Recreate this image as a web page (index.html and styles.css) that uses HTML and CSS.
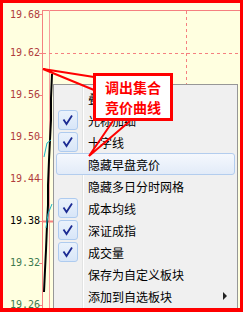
FILE: index.html
```html
<!DOCTYPE html>
<html lang="zh">
<head>
  <meta charset="UTF-8" />
  <title>分时图右键菜单</title>
  <link rel="stylesheet" href="styles.css">
</head>
<body>
  <div class="frame">
    <svg class="chart" width="237" height="305" viewBox="3 3 237 305">
      <path d="M42 10.5H240M42.5 10V308" stroke="#f58080" fill="none"/>
      <path d="M49.5 10V308" stroke="#f7a0a0" fill="none"/>
      <path d="M39 14.5H42M39 53.5H42M39 95.5H42M39 137.5H42M39 179.5H42M39 221.5H42M39 263.5H42M39 305.5H42" stroke="#f58080"/>
      <path d="M43 53.5H240M186.5 11V308" stroke="#f58080" stroke-dasharray="3 3" fill="none"/>
      <path d="M43 221.5H53" stroke="#f58080" stroke-width="2"/>
      <polyline points="52,74 51,98 51,120 50,140 49,160 48,185 48,205 47,225 46,250 45,270 44,292" stroke="#000" stroke-width="2" fill="none"/>
      <polyline points="44,157 47,143 51,140" stroke="#1fb3c4" fill="none"/>
      <polyline points="46,228 48,214 52,204" stroke="#1fb3c4" fill="none"/>
    </svg>

    <div class="axis">
      <span class="first">19.68</span>
      <span>19.62</span>
      <span>19.56</span>
      <span>19.50</span>
      <span>19.44</span>
      <span class="cur">19.38</span>
      <span class="low">19.32</span>
      <span class="low">19.26</span>
    </div>

    <div class="menu">
      <div class="item"><i class="mark"></i>叠加品种</div>
      <div class="item on"><i class="mark"><svg width="18" height="18" viewBox="0 0 18 18"><path d="M4.5 8.5L7.5 13L13 4.5" stroke="#1b2a92" stroke-width="1.8" fill="none"/></svg></i>光标加细</div>
      <div class="item on"><i class="mark"><svg width="18" height="18" viewBox="0 0 18 18"><path d="M4.5 8.5L7.5 13L13 4.5" stroke="#1b2a92" stroke-width="1.8" fill="none"/></svg></i>十字线</div>
      <div class="item hover"><i class="mark"></i>隐藏早盘竞价</div>
      <div class="item"><i class="mark"></i>隐藏多日分时网格</div>
      <div class="item on"><i class="mark"><svg width="18" height="18" viewBox="0 0 18 18"><path d="M4.5 8.5L7.5 13L13 4.5" stroke="#1b2a92" stroke-width="1.8" fill="none"/></svg></i>成本均线</div>
      <div class="item on"><i class="mark"><svg width="18" height="18" viewBox="0 0 18 18"><path d="M4.5 8.5L7.5 13L13 4.5" stroke="#1b2a92" stroke-width="1.8" fill="none"/></svg></i>深证成指</div>
      <div class="item on"><i class="mark"><svg width="18" height="18" viewBox="0 0 18 18"><path d="M4.5 8.5L7.5 13L13 4.5" stroke="#1b2a92" stroke-width="1.8" fill="none"/></svg></i>成交量</div>
      <div class="item"><i class="mark"></i>保存为自定义板块</div>
      <div class="item"><i class="mark"></i>添加到自选板块<b class="sub"></b></div>
    </div>

    <svg class="pointers" width="237" height="305" viewBox="3 3 237 305">
      <polyline points="94,77 43,69 94,90" stroke="#f00" stroke-width="2" fill="none"/>
      <polyline points="113,121 89,156 130,121" stroke="#f00" stroke-width="2" fill="none"/>
    </svg>

    <div class="callout">调出集合<br>竞价曲线</div>
  </div>
</body>
</html>
```

FILE: styles.css
```css
body {
  margin: 0;
}
.frame {
  position: relative;
  width: 243px;
  height: 312px;
  box-sizing: border-box;
  border: 3px solid #f00;
  border-bottom-width: 4px;
  background: #ffffe0;
  overflow: hidden;
  font-family: "Noto Sans CJK SC", sans-serif;
}
.chart,
.pointers {
  position: absolute;
  left: 0;
  top: 0;
}
.axis {
  position: relative;
  width: 37px;
  display: flex;
  flex-direction: column;
  font: 10px/42px "DejaVu Sans Mono", monospace;
  text-align: right;
  color: #b03c3c;
}
.axis span {
  height: 42px;
  flex: none;
}
.axis .first {
  height: 29px;
  line-height: 23px;
}
.axis .cur {
  color: #000;
}
.axis .low {
  color: #3d7a4f;
}
.menu {
  position: absolute;
  left: 50px;
  top: 81px;
  width: 185px;
  box-sizing: border-box;
  border: 1px solid #979797;
  padding: 2px;
  background: #f0f0f0 linear-gradient(to right, transparent 28px, #e2e3e3 28px, #e2e3e3 29px, #fff 29px, #fff 30px, transparent 30px);
}
.item {
  display: flex;
  align-items: center;
  height: 22px;
  box-sizing: border-box;
  border: 1px solid transparent;
  border-radius: 3px;
  font-size: 12px;
  color: #000;
  white-space: nowrap;
}
.item.hover {
  border-color: #b3cdee;
  background: linear-gradient(#f5f8fd, #e2ebf8);
}
.mark {
  display: block;
  flex: none;
  width: 20px;
  height: 20px;
  margin: 0 10px 0 1px;
  box-sizing: border-box;
}
.item.on .mark {
  border: 1px solid #aecbef;
  border-radius: 3px;
  background: linear-gradient(#eaf2fc, #d8e6f8);
}
.mark svg {
  display: block;
}
.sub {
  margin-left: auto;
  margin-right: 7px;
  border-left: 4px solid #222;
  border-top: 4px solid transparent;
  border-bottom: 4px solid transparent;
}
.callout {
  position: absolute;
  left: 90px;
  top: 70px;
  width: 80px;
  height: 48px;
  box-sizing: border-box;
  border: 3px solid #f00;
  background: #fff;
  padding-top: 1px;
  color: #f00;
  font-weight: bold;
  font-size: 14px;
  line-height: 20px;
  text-align: center;
}
```
